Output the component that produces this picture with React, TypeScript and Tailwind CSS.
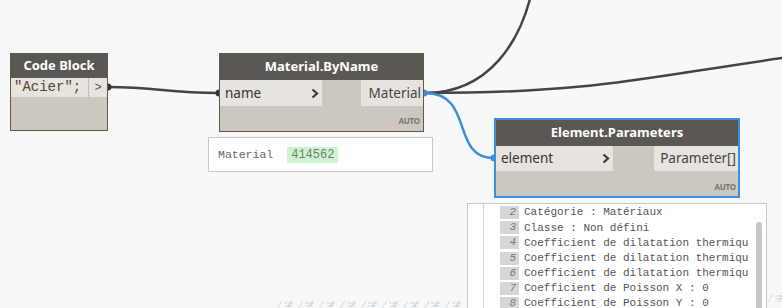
import React from "react";

const sans = { fontFamily: '"Noto Sans", "Open Sans", sans-serif' };
const mono = { fontFamily: '"Liberation Mono", "DejaVu Sans Mono", monospace' };

function Chevron() {
  return (
    <svg width="8" height="11" viewBox="0 0 8 11" className="shrink-0">
      <path d="M1.5 1.5 L6 5.5 L1.5 9.5" fill="none" stroke="#3a3a3a" strokeWidth="2.2" />
    </svg>
  );
}

function Auto() {
  return <div className="text-[8px] font-bold text-[#7a7772] leading-none tracking-tight">AUTO</div>;
}

const rows = [
  ["2", "Catégorie : Matériaux"],
  ["3", "Classe : Non défini"],
  ["4", "Coefficient de dilatation thermiqu"],
  ["5", "Coefficient de dilatation thermiqu"],
  ["6", "Coefficient de dilatation thermiqu"],
  ["7", "Coefficient de Poisson X : 0"],
  ["8", "Coefficient de Poisson Y : 0"],
];

function Hatch({ count }: { count: number }) {
  return (
    <svg width={count * 21} height="12" viewBox={`0 0 ${count * 21} 12`} opacity="0.7">
      {Array.from({ length: count }).map((_, i) => (
        <g key={i} transform={`translate(${i * 21} 0)`} stroke="#b3cde0" strokeWidth="1" fill="none">
          <path d="M0 12 L5 4" />
          <path d="M7 6 H16 M8 9 H15 M7 12 H16" />
          <path d="M11 10 L15 4" stroke="#9fb7c9" />
        </g>
      ))}
    </svg>
  );
}

export default function App() {
  return (
    <div className="relative w-[782px] h-[308px] overflow-hidden bg-[#f8f8f8]" style={sans}>
      {/* wires */}
      <svg className="absolute inset-0" width="782" height="308" viewBox="0 0 782 308">
        <path d="M107 87 C160 87 165 93 219 93" fill="none" stroke="#444" strokeWidth="2.5" />
        <path d="M425 93 C490 93 520 40 531 -5" fill="none" stroke="#444" strokeWidth="2.5" />
        <path d="M425 93 C600 93 650 76 790 57" fill="none" stroke="#444" strokeWidth="2.5" />
        <path d="M425 93 C475 93 450 158 494 158" fill="none" stroke="#3b8fdb" strokeWidth="2.5" />
        <circle cx="108" cy="87" r="3.5" fill="#333" />
        <circle cx="219" cy="93" r="3.5" fill="#333" />
        <circle cx="424" cy="93" r="3.5" fill="#3b8fdb" />
        <circle cx="494" cy="158" r="3.5" fill="#3b8fdb" />
      </svg>

      {/* Code Block */}
      <div className="absolute left-[10px] top-[53px] w-[98px] h-[78px] border border-[#5b5854] bg-[#ccc7bf] flex flex-col">
        <div className="h-[24px] bg-[#5b5854] flex items-center justify-center text-white font-bold text-[13px]">
          Code Block
        </div>
        <div className="h-[19px] flex bg-[#e7e3de]">
          <div className="flex-1 flex items-center pl-[3px] text-[14px] text-[#5a4530]" style={mono}>
            "Acier";
          </div>
          <div className="w-[19px] border-l border-[#c4bfb7] flex items-center justify-center text-[12px] text-[#555]" style={mono}>
            &gt;
          </div>
        </div>
      </div>

      {/* Material.ByName */}
      <div className="absolute left-[219px] top-[53px] w-[205px] h-[79px] border border-[#5b5854] bg-[#ccc7bf] flex flex-col">
        <div className="h-[26px] bg-[#5b5854] flex items-center justify-center text-white font-bold text-[13px]">
          Material.ByName
        </div>
        <div className="h-[26px] flex justify-between">
          <div className="w-[102px] bg-[#e7e3de] flex items-center justify-between pl-[5px] pr-[3px] text-[13.5px] text-[#333]">
            name
            <Chevron />
          </div>
          <div className="w-[62px] bg-[#e7e3de] flex items-center justify-end pr-[2px] text-[13.5px] text-[#444]">
            Material
          </div>
        </div>
        <div className="flex-1 flex items-end justify-end pr-[3px] pb-[6px]">
          <Auto />
        </div>
      </div>

      {/* Material preview */}
      <div className="absolute left-[208px] top-[137px] w-[225px] h-[35px] bg-white border border-[#c9c9c9] flex items-center gap-[14px] pl-[9px] text-[11.5px] text-[#666]" style={mono}>
        <span>Material</span>
        <span className="bg-[#cdf5cd] px-[4px] leading-[16px] text-[12px] text-[#777]">414562</span>
      </div>

      {/* Element.Parameters */}
      <div className="absolute left-[494px] top-[118px] w-[246px] h-[80px] border-2 border-[#3b8fdb] bg-[#ccc7bf] flex flex-col">
        <div className="h-[26px] bg-[#5b5854] flex items-center justify-center text-white font-bold text-[13px]">
          Element.Parameters
        </div>
        <div className="h-[25px] flex justify-between">
          <div className="w-[117px] bg-[#e7e3de] flex items-center justify-between pl-[5px] pr-[3px] text-[13.5px] text-[#333]">
            element
            <Chevron />
          </div>
          <div className="w-[84px] bg-[#e7e3de] flex items-center justify-end pr-[2px] text-[13.5px] text-[#444]">
            Parameter[]
          </div>
        </div>
        <div className="flex-1 flex items-end justify-end pr-[2px] pb-[5px]">
          <Auto />
        </div>
      </div>

      {/* List preview */}
      <div className="absolute left-[467px] top-[203px] w-[300px] h-[120px] bg-white border border-[#c9c9c9] flex">
        <div className="w-[16px] border-r border-[#d2d2d2]" />
        <div className="flex-1 flex flex-col pt-[1px] pl-[16px] text-[11px] text-[#555]" style={mono}>
          {rows.map(([n, t]) => (
            <div key={n} className="h-[15.2px] flex items-center whitespace-nowrap overflow-hidden">
              <span className="w-[19px] h-[13px] bg-[#d6d6d6] text-[#777] italic text-right pr-[3px] leading-[13px] mr-[5px] shrink-0">
                {n}
              </span>
              <span className="w-[225px] overflow-hidden">{t}</span>
            </div>
          ))}
        </div>
        <div className="w-[10px] flex justify-start pt-[18px]">
          <div className="w-[6px] h-[120px] rounded-full bg-[#c6c6c6]" />
        </div>
      </div>

      {/* faint background texture */}
      <div className="absolute left-[277px] top-[297px]">
        <Hatch count={9} />
      </div>
      <div className="absolute left-[768px] top-[290px]">
        <Hatch count={1} />
      </div>
    </div>
  );
}
